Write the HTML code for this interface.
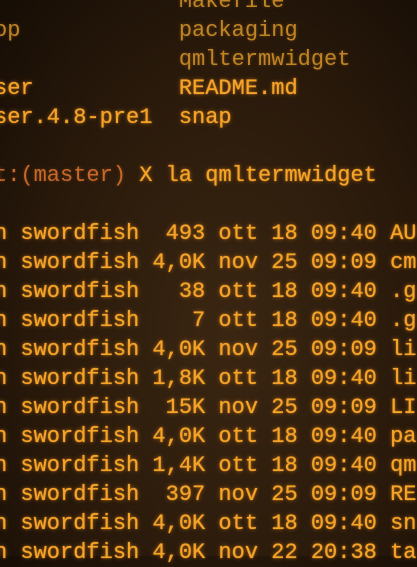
<!DOCTYPE html>
<html><head><meta charset="utf-8"><style>
html,body{margin:0;padding:0;width:417px;height:556px;overflow:hidden;}
body{background:radial-gradient(ellipse at 55% 60%,#3a2612 0%,#2a1a0b 55%,#160d05 100%);}
pre{position:absolute;left:-6px;top:-13px;margin:0;font-family:"Liberation Mono",monospace;font-size:22px;line-height:29px;color:#f6a428;font-weight:normal;text-shadow:0 0 1px #f6a428,0 0 4px rgba(255,150,30,0.6);}
.d{color:#c08424;text-shadow:0 0 3px rgba(200,130,30,0.4);}
.r{color:#c8682a;text-shadow:0 0 3px rgba(200,100,30,0.4);}
</style></head><body>
<pre><span class="d">              Makefile</span>
<span class="d">op            packaging</span>
<span class="d">              qmltermwidget</span>
ser           README.md
ser.4.8-pre1  snap

<span class="r">t:(master)</span> X la qmltermwidget

n swordfish  493 ott 18 09:40 AU
n swordfish 4,0K nov 25 09:09 cm
n swordfish   38 ott 18 09:40 .g
n swordfish    7 ott 18 09:40 .g
n swordfish 4,0K nov 25 09:09 li
n swordfish 1,8K ott 18 09:40 li
n swordfish  15K nov 25 09:09 LI
n swordfish 4,0K ott 18 09:40 pa
n swordfish 1,4K ott 18 09:40 qm
n swordfish  397 nov 25 09:09 RE
n swordfish 4,0K ott 18 09:40 sn
n swordfish 4,0K nov 22 20:38 ta</pre>
</body></html>
